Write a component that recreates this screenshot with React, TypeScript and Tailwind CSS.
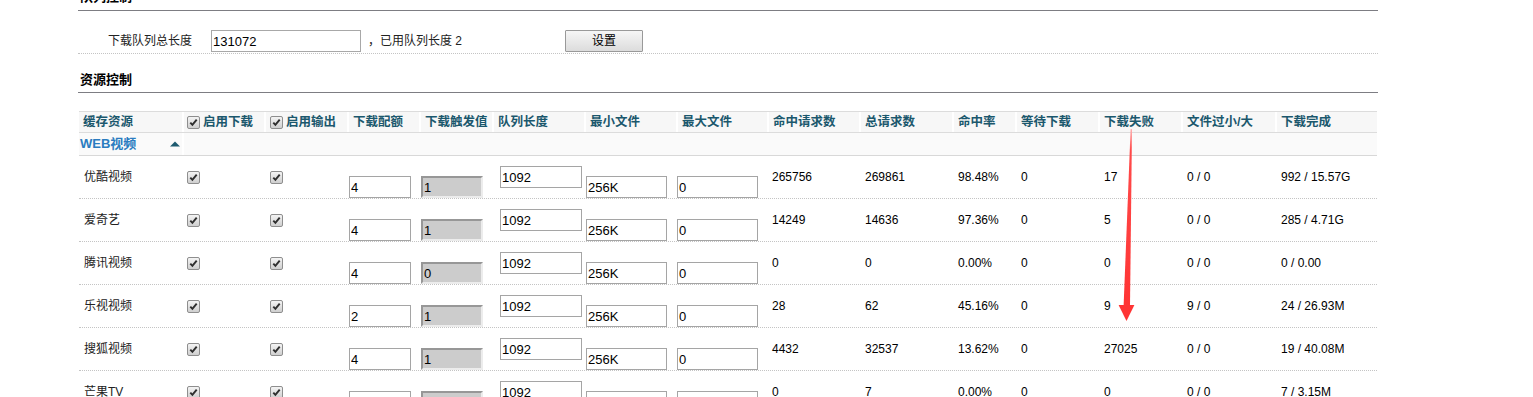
import React from "react";

const W = [
  "w-[103px]",
  "w-[82px]",
  "w-[83px]",
  "w-[72px]",
  "w-[73px]",
  "w-[92px]",
  "w-[92px]",
  "w-[91px]",
  "w-[92px]",
  "w-[93px]",
  "w-[63px]",
  "w-[83px]",
  "w-[83px]",
  "w-[94px]",
  "w-[102px]",
];

const Check = () => (
  <span className="inline-flex w-[13px] h-[13px] shrink-0 items-center justify-center rounded-[2px] border border-[#8e8e8e] bg-linear-to-b from-[#f4f4f4] to-[#cfcfcf]">
    <svg width="9" height="9" viewBox="0 0 9 9">
      <path d="M1.3 4.6 L3.4 6.9 L7.7 1.6" stroke="#2f2f2f" strokeWidth="1.9" fill="none" />
    </svg>
  </span>
);

const TextBox = ({ v, w }: { v: string; w: string }) => (
  <input
    readOnly
    defaultValue={v}
    className={`${w} h-[22px] border border-[#a5a5a5] bg-white px-[1px] text-[13px] leading-[20px] text-black outline-none`}
  />
);

const GrayBox = ({ v }: { v: string }) => (
  <input
    readOnly
    defaultValue={v}
    className="w-[62px] h-[22px] border-2 border-t-[#979797] border-l-[#979797] border-b-[#ececec] border-r-[#ececec] bg-[#cccccc] px-[1px] text-[13px] leading-[18px] text-black outline-none"
  />
);

type Row = {
  name: string;
  quota: string;
  trig: string;
  hit: string;
  total: string;
  rate: string;
  wait: string;
  fail: string;
  size: string;
  done: string;
};

const rows: Row[] = [
  { name: "优酷视频", quota: "4", trig: "1", hit: "265756", total: "269861", rate: "98.48%", wait: "0", fail: "17", size: "0 / 0", done: "992 / 15.57G" },
  { name: "爱奇艺", quota: "4", trig: "1", hit: "14249", total: "14636", rate: "97.36%", wait: "0", fail: "5", size: "0 / 0", done: "285 / 4.71G" },
  { name: "腾讯视频", quota: "4", trig: "0", hit: "0", total: "0", rate: "0.00%", wait: "0", fail: "0", size: "0 / 0", done: "0 / 0.00" },
  { name: "乐视视频", quota: "2", trig: "1", hit: "28", total: "62", rate: "45.16%", wait: "0", fail: "9", size: "9 / 0", done: "24 / 26.93M" },
  { name: "搜狐视频", quota: "4", trig: "1", hit: "4432", total: "32537", rate: "13.62%", wait: "0", fail: "27025", size: "0 / 0", done: "19 / 40.08M" },
  { name: "芒果TV", quota: "4", trig: "1", hit: "0", total: "7", rate: "0.00%", wait: "0", fail: "0", size: "0 / 0", done: "7 / 3.15M" },
];

const headers = [
  "下载配额",
  "下载触发值",
  "队列长度",
  "最小文件",
  "最大文件",
  "命中请求数",
  "总请求数",
  "命中率",
  "等待下载",
  "下载失败",
  "文件过小/大",
  "下载完成",
];

export default function App() {
  return (
    <div className="relative w-[1533px] h-[397px] overflow-hidden bg-white text-[12px] text-[#111] font-['Liberation_Sans','Noto_Sans_CJK_SC',sans-serif]">
      <div className="ml-[78px] w-[1300px]">
        {/* 队列控制 */}
        <div className="h-[11px] border-b border-[#7d7d83] flex items-end">
          <span className="ml-[2px] mb-[6px] font-bold text-[13px] leading-[14px] text-black">队列控制</span>
        </div>
        <div className="h-[43px] pt-[19px] flex items-start border-b border-dotted border-[#c4c4c4]">
          <span className="ml-[30px] w-[103px] h-[22px] flex items-center text-[12px] text-[#222]">下载队列总长度</span>
          <input
            readOnly
            defaultValue="131072"
            className="w-[150px] h-[22px] border border-[#a8a8a8] bg-white px-[1px] text-[13px] leading-[20px] text-black outline-none"
          />
          <span className="ml-[7px] w-[197px] h-[22px] flex items-center text-[12px] text-[#222]">，已用队列长度 2</span>
          <button className="w-[78px] h-[22px] border border-[#999] rounded-[1px] bg-linear-to-b from-[#f6f6f6] to-[#dcdcdc] text-[12px] text-black flex items-center justify-center">
            设置
          </button>
        </div>

        {/* 资源控制 */}
        <div className="h-[39px] border-b border-[#7d7d83] flex items-end pb-[5px]">
          <span className="ml-[2px] font-bold text-[13px] leading-[14px] text-black">资源控制</span>
        </div>

        {/* table */}
        <div className="mt-[18px] ml-[1px] w-[1298px]">
          {/* header */}
          <div className="flex h-[22px] border-t border-b border-[#dcdcdc] bg-[#f7f7f7] font-bold text-[12.5px] text-[#1b586d]">
            <div className={`${W[0]} flex items-center pl-[4px]`}>缓存资源</div>
            <div className={`${W[1]} flex items-center pl-[3px] gap-[3px] border-l-2 border-white`}>
              <Check />
              <span>启用下载</span>
            </div>
            <div className={`${W[2]} flex items-center pl-[4px] gap-[3px] border-l-2 border-white`}>
              <Check />
              <span>启用输出</span>
            </div>
            {headers.map((h, i) => (
              <div key={h} className={`${W[i + 3]} flex items-center pl-[4px] border-l-2 border-white whitespace-nowrap`}>
                {h}
              </div>
            ))}
          </div>
          {/* group row */}
          <div className="flex h-[23px] border-b border-[#d8d8d8] bg-[#fafafa]">
            <div className={`${W[0]} flex items-center justify-between pl-[1px] pr-[2px]`}>
              <span className="font-bold text-[13px] text-[#2a7cc0]">WEB视频</span>
              <svg width="10" height="6" viewBox="0 0 10 6">
                <path d="M0 5.5 L5 0.5 L10 5.5 Z" fill="#1d5a6f" />
              </svg>
            </div>
            <div className="flex-1 border-l-2 border-white" />
          </div>
          {/* data rows */}
          {rows.map((r) => (
            <div key={r.name} className="flex h-[43px] border-b border-dotted border-[#c4c4c4] text-[12px] text-black">
              <div className={`${W[0]} flex items-center pl-[5px] text-[#222]`}>{r.name}</div>
              <div className={`${W[1]} flex items-center pl-[5px]`}>
                <Check />
              </div>
              <div className={`${W[2]} flex items-center pl-[6px]`}>
                <Check />
              </div>
              <div className={`${W[3]} flex items-end pl-[2px]`}>
                <TextBox v={r.quota} w="w-[62px]" />
              </div>
              <div className={`${W[4]} flex items-end pl-[2px]`}>
                <GrayBox v={r.trig} />
              </div>
              <div className={`${W[5]} flex items-center pl-[8px]`}>
                <TextBox v="1092" w="w-[82px]" />
              </div>
              <div className={`${W[6]} flex items-end pl-[2px]`}>
                <TextBox v="256K" w="w-[81px]" />
              </div>
              <div className={`${W[7]} flex items-end pl-[1px]`}>
                <TextBox v="0" w="w-[81px]" />
              </div>
              <div className={`${W[8]} flex items-center pl-[5px]`}>{r.hit}</div>
              <div className={`${W[9]} flex items-center pl-[6px]`}>{r.total}</div>
              <div className={`${W[10]} flex items-center pl-[6px]`}>{r.rate}</div>
              <div className={`${W[11]} flex items-center pl-[6px]`}>{r.wait}</div>
              <div className={`${W[12]} flex items-center pl-[6px]`}>{r.fail}</div>
              <div className={`${W[13]} flex items-center pl-[6px]`}>{r.size}</div>
              <div className={`${W[14]} flex items-center pl-[6px]`}>{r.done}</div>
            </div>
          ))}
        </div>
      </div>

      {/* red annotation arrow */}
      <svg className="absolute left-0 top-0 pointer-events-none" width="1533" height="397" viewBox="0 0 1533 397">
        <defs>
          <linearGradient id="shaft" x1="0" y1="0" x2="0" y2="1">
            <stop offset="0" stopColor="#ffb0b0" />
            <stop offset="0.12" stopColor="#ff4a4a" />
            <stop offset="1" stopColor="#ff3434" />
          </linearGradient>
        </defs>
        <polygon points="1130.6,129 1132,129 1130,306 1123.6,306" fill="url(#shaft)" />
        <polygon points="1118.6,305 1134.4,305 1126.5,321" fill="#ff3434" />
      </svg>
    </div>
  );
}
